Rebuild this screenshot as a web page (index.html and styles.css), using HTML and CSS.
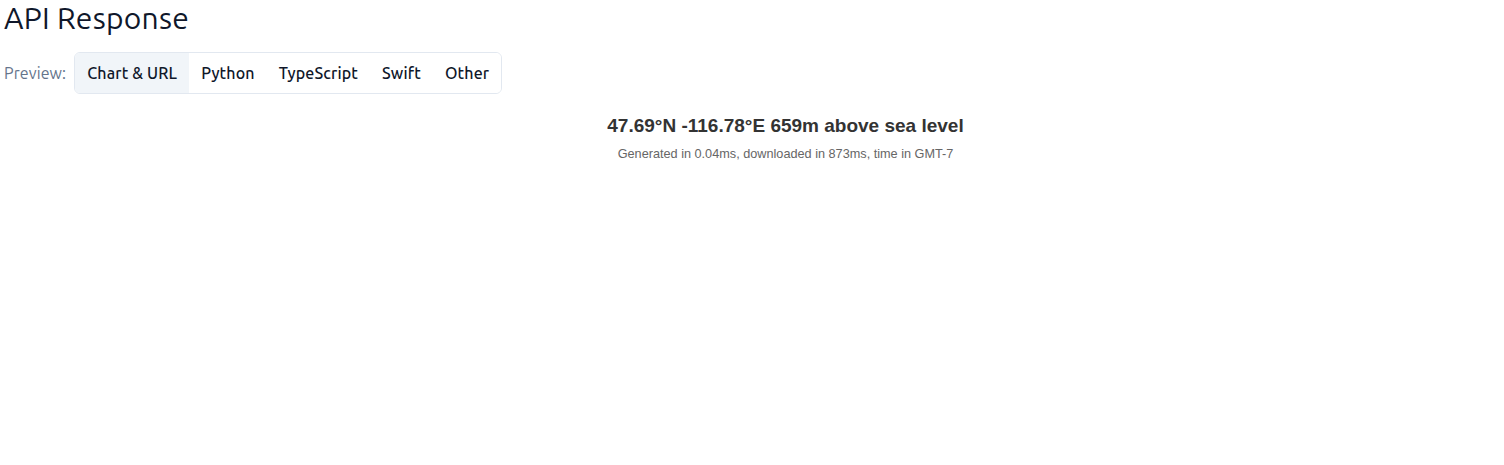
FILE: index.html
```html
<!DOCTYPE html>
<html lang="en">
<head>
<meta charset="utf-8">
<title>API Response</title>
<link rel="stylesheet" href="styles.css">
</head>
<body>
<main class="page">
  <h2 class="heading">API Response</h2>
  <div class="preview-row">
    <span class="preview-label">Preview:</span>
    <div class="tabs">
      <button class="tab tab-active">Chart &amp; URL</button>
      <button class="tab">Python</button>
      <button class="tab">TypeScript</button>
      <button class="tab">Swift</button>
      <button class="tab">Other</button>
    </div>
  </div>
  <section class="chart">
    <div class="chart-title">47.69°N -116.78°E 659m above sea level</div>
    <div class="chart-subtitle">Generated in 0.04ms, downloaded in 873ms, time in GMT-7</div>
  </section>
</main>
</body>
</html>
```
FILE: styles.css
```css
html, body {
  margin: 0;
  padding: 0;
  background: #ffffff;
}
.page {
  padding: 0 4px;
  font-family: "Ubuntu", "Noto Sans", "Open Sans", sans-serif;
  color: #0f172a;
}
.heading {
  margin: 0;
  font-size: 30px;
  line-height: 36px;
  font-weight: 400;
  letter-spacing: 0.25px;
  color: #0f172a;
}
.preview-row {
  display: flex;
  align-items: center;
  gap: 8px;
  margin-top: 16px;
}
.preview-label {
  font-size: 16px;
  line-height: 24px;
  letter-spacing: 0.1px;
  color: #64748b;
}
.tabs {
  display: flex;
  border: 1px solid #e2e8f0;
  border-radius: 6px;
  overflow: hidden;
}
.tab {
  font-family: inherit;
  font-size: 16px;
  line-height: 24px;
  font-weight: 500;
  letter-spacing: 0.15px;
  color: #0f172a;
  background: #ffffff;
  border: 0;
  padding: 8px 12px;
  margin: 0;
  cursor: pointer;
}
.tab-active {
  background: #f1f5f9;
}
.chart {
  margin-left: 67px;
  padding-top: 20px;
  height: 340px;
  font-family: "Liberation Sans", Arial, sans-serif;
  text-align: center;
}
.chart-title {
  font-size: 19px;
  line-height: 24px;
  font-weight: 700;
  color: #333333;
}
.chart-subtitle {
  margin-top: 8px;
  font-size: 12.7px;
  line-height: 16px;
  color: #666666;
}
```
